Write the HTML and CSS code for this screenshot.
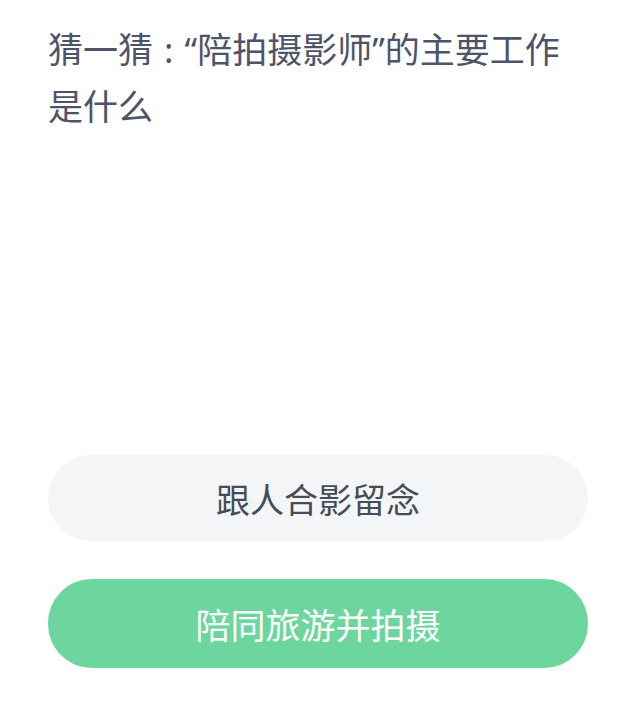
FILE: index.html
```html
<!DOCTYPE html>
<html lang="zh-CN">
<head>
    <meta charset="utf-8">
    <title>猜一猜</title>
    <link rel="stylesheet" href="styles.css">
</head>
<body>
    <div class="page">
        <h1 class="question">猜一猜 : “陪拍摄影师”的主要工作是什么</h1>
        <div class="options">
            <button type="button" class="option">跟人合影留念</button>
            <button type="button" class="option correct">陪同旅游并拍摄</button>
        </div>
    </div>
</body>
</html>
```

FILE: styles.css
```css
body {
    margin: 0;
    padding: 0;
    background: #ffffff;
    font-family: "Noto Sans CJK SC", "Noto Sans", sans-serif;
}
.page {
    padding: 21px 40px 0 48px;
}
.question {
    margin: 0;
    max-width: 530px;
    font-family: "Noto Sans", "Noto Sans CJK SC", sans-serif;
    font-size: 35px;
    font-weight: normal;
    line-height: 57px;
    color: #4d5469;
    word-spacing: 2px;
}
.options {
    display: flex;
    flex-direction: column;
    gap: 38px;
    margin-top: 320px;
}
.option {
    height: 86px;
    border: none;
    border-radius: 44px;
    background-color: #f4f5f7;
    color: #474c57;
    font-family: inherit;
    font-size: 34px;
}
.option.correct {
    height: 89px;
    font-size: 35px;
    background-color: #6dd69e;
    color: #ffffff;
}
```
